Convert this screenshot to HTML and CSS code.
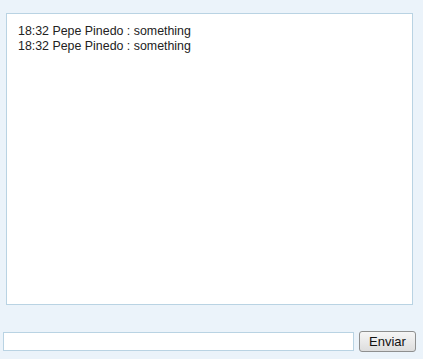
FILE: index.html
```html
<!DOCTYPE html>
<html lang="es">
<head>
    <meta charset="UTF-8">
    <title>Chat</title>
    <link rel="stylesheet" href="styles.css">
</head>
<body>
    <div class="chat-log">
        <div class="line">18:32 Pepe Pinedo : something</div>
        <div class="line">18:32 Pepe Pinedo : something</div>
    </div>

    <form class="chat-form" onsubmit="return false">
        <input type="text" class="chat-input" autofocus>
        <button class="chat-send">Enviar</button>
    </form>
</body>
</html>
```

FILE: styles.css
```css
body {
    margin: 0;
    padding: 13px 10px 0 6px;
    background-color: #EBF3FA;
    font-family: 'Liberation Sans', Arial, sans-serif;
    font-size: 12.4px;
    color: #222222;
}

.chat-log {
    height: 270px;
    background-color: #FFFFFF;
    border: 1px solid #B9D3E3;
    padding: 10px 11px;
}

.line {
    line-height: 15px;
}

.chat-form {
    display: flex;
    align-items: center;
    margin: 26px -8px 0 -3px;
    gap: 5px;
}

.chat-input {
    flex-shrink: 0;
    width: 351px;
    height: 19px;
    box-sizing: border-box;
    border: 1px solid #B9D3E3;
    padding: 1px 3px;
    background: #FFFFFF;
    outline: none;
    caret-color: #000000;
}

.chat-send {
    flex-shrink: 0;
    width: 57px;
    height: 21px;
    border: 1px solid #8E8F8F;
    border-radius: 3px;
    background: linear-gradient(#F6F6F6, #DDDDDD);
    font-family: 'Liberation Sans', Arial, sans-serif;
    font-size: 13px;
    color: #111111;
    padding: 0;
}
```
